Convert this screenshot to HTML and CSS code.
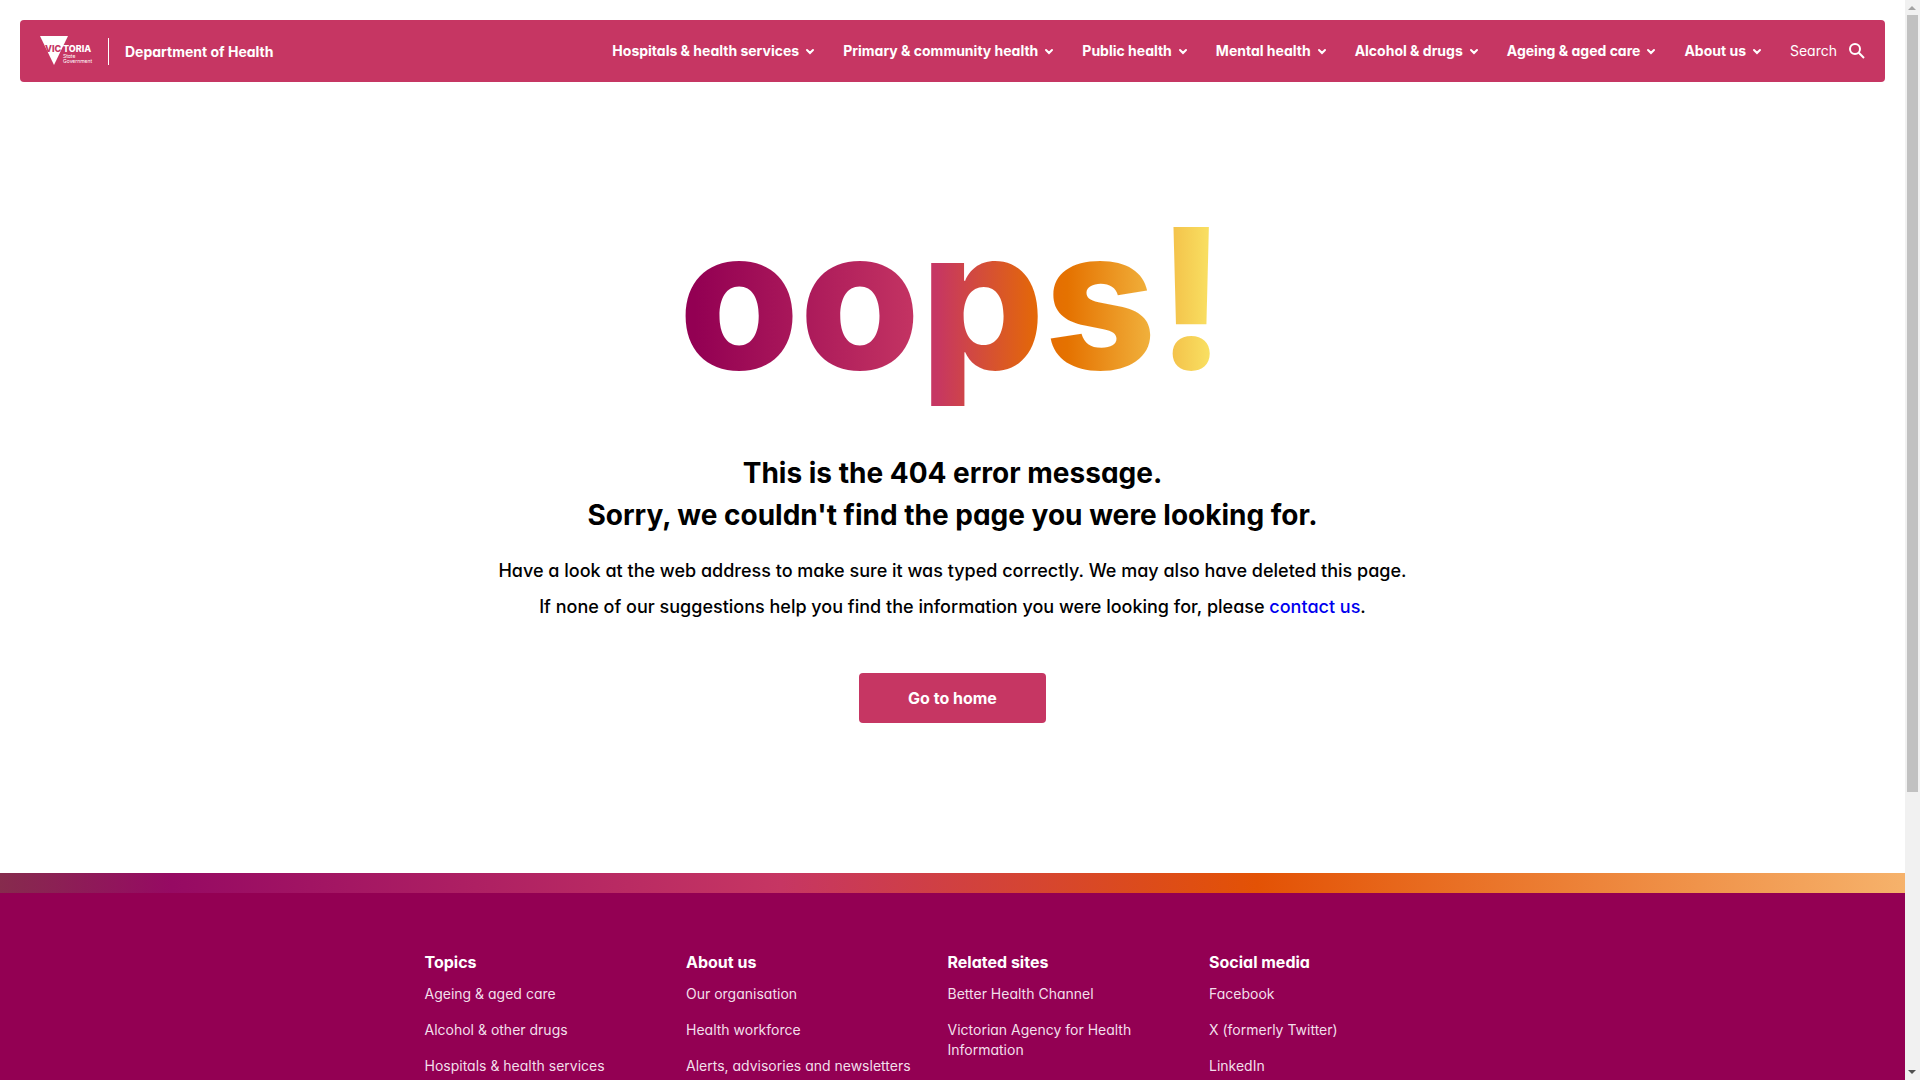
FILE: index.html
```html
<!DOCTYPE html>
<html lang="en">
<head>
    <meta charset="UTF-8">
    <meta name="viewport" content="width=device-width, initial-scale=1.0">
    <title>Page not found | Department of Health</title>
    <link rel="stylesheet" href="styles.css">
</head>
<body>
    <div class="page">
        <header class="header">
            <a class="logo" href="#" aria-label="Victoria State Government">
                <svg width="54" height="32" viewBox="0 0 54 32">
                    <path d="M0 1h28L14 30z" fill="#fff"/>
                    <g class="logo-name">
                        <text x="5" y="17" fill="#c63663">VIC</text>
                        <text x="23" y="17" fill="#fff">TORIA</text>
                    </g>
                    <text class="logo-small" x="23" y="23">State</text>
                    <text class="logo-small" x="23" y="28">Government</text>
                </svg>
            </a>
            <a class="site-name" href="#">Department of Health</a>
            <nav class="nav">
                <button type="button">Hospitals &amp; health services <svg class="chevron" viewBox="0 0 10 7"><path d="M2 2l3 3 3-3"/></svg></button>
                <button type="button">Primary &amp; community health <svg class="chevron" viewBox="0 0 10 7"><path d="M2 2l3 3 3-3"/></svg></button>
                <button type="button">Public health <svg class="chevron" viewBox="0 0 10 7"><path d="M2 2l3 3 3-3"/></svg></button>
                <button type="button">Mental health <svg class="chevron" viewBox="0 0 10 7"><path d="M2 2l3 3 3-3"/></svg></button>
                <button type="button">Alcohol &amp; drugs <svg class="chevron" viewBox="0 0 10 7"><path d="M2 2l3 3 3-3"/></svg></button>
                <button type="button">Ageing &amp; aged care <svg class="chevron" viewBox="0 0 10 7"><path d="M2 2l3 3 3-3"/></svg></button>
                <button type="button">About us <svg class="chevron" viewBox="0 0 10 7"><path d="M2 2l3 3 3-3"/></svg></button>
                <button type="button" class="search">Search
                    <svg width="16" height="16" viewBox="0 0 16 16"><circle cx="6" cy="6" r="5"/><path d="M9.8 9.8L15 15"/></svg>
                </button>
            </nav>
        </header>

        <main class="error">
            <h1 class="oops">oops!</h1>
            <h2>This is the 404 error message.<br>Sorry, we couldn't find the page you were looking for.</h2>
            <p>Have a look at the web address to make sure it was typed correctly. We may also have deleted this page.</p>
            <p>If none of our suggestions help you find the information you were looking for, please <a href="#">contact us</a>.</p>
            <button type="button" class="home-button">Go to home</button>
        </main>

        <footer class="footer">
            <div class="footer-links">
                <section>
                    <h3>Topics</h3>
                    <ul>
                        <li><a href="#">Ageing &amp; aged care</a></li>
                        <li><a href="#">Alcohol &amp; other drugs</a></li>
                        <li><a href="#">Hospitals &amp; health services</a></li>
                    </ul>
                </section>
                <section>
                    <h3>About us</h3>
                    <ul>
                        <li><a href="#">Our organisation</a></li>
                        <li><a href="#">Health workforce</a></li>
                        <li><a href="#">Alerts, advisories and newsletters</a></li>
                    </ul>
                </section>
                <section>
                    <h3>Related sites</h3>
                    <ul>
                        <li><a href="#">Better Health Channel</a></li>
                        <li><a href="#">Victorian Agency for Health Information</a></li>
                    </ul>
                </section>
                <section>
                    <h3>Social media</h3>
                    <ul>
                        <li><a href="#">Facebook</a></li>
                        <li><a href="#">X (formerly Twitter)</a></li>
                        <li><a href="#">LinkedIn</a></li>
                    </ul>
                </section>
            </div>
        </footer>
    </div>

    <div class="scrollbar" aria-hidden="true">
        <svg width="15" height="15" viewBox="0 0 15 15"><path d="M3 10h8L7 6z" fill="#a3a3a3"/></svg>
        <div class="track"><div class="thumb"></div></div>
        <svg width="15" height="15" viewBox="0 0 15 15"><path d="M3 5h8L7 9z" fill="#505050"/></svg>
    </div>
</body>
</html>
```
FILE: styles.css
```css
* {
    box-sizing: border-box;
}
body {
    display: flex;
    height: 100vh;
    margin: 0;
    font-family: Inter, "Liberation Sans", sans-serif;
    font-feature-settings: "cv11";
    color: #000;
    background: #fff;
}
button {
    font: inherit;
    font-feature-settings: inherit;
    border: none;
    cursor: pointer;
}
a {
    text-decoration: none;
}
.page {
    flex: 1;
    overflow-y: auto;
    scrollbar-width: none;
}

/* Header */
.header {
    display: flex;
    align-items: center;
    height: 62px;
    margin: 20px 20px 0;
    padding: 0 20px;
    border-radius: 4px;
    background: #c63663;
    color: #fff;
}
.logo {
    display: flex;
    padding-right: 14px;
}
.logo-name {
    font-size: 9px;
    font-weight: 800;
}
.logo-small {
    font-size: 5px;
    font-weight: 400;
    fill: #fff;
}
.site-name {
    padding-left: 16px;
    border-left: 1px solid #fff;
    color: #fff;
    font-size: 14px;
    font-weight: 700;
    line-height: 27px;
}
.nav {
    display: flex;
    align-items: center;
    gap: 28px;
    margin-left: auto;
}
.nav button {
    display: flex;
    align-items: center;
    gap: 6px;
    padding: 0;
    background: none;
    color: #fff;
    font-size: 14px;
    font-weight: 700;
    line-height: 20px;
    white-space: nowrap;
}
.nav svg {
    fill: none;
    stroke: #fff;
    stroke-width: 2;
}
.chevron {
    width: 10px;
    height: 7px;
    stroke-linecap: round;
}
.nav .search {
    gap: 12px;
    font-weight: 400;
}

/* Error message */
.error {
    display: flex;
    flex-direction: column;
    align-items: center;
    padding: 108px 20px 150px;
    text-align: center;
}
.oops {
    margin: 0 0 46px;
    font-size: 195px;
    font-weight: 800;
    line-height: 216px;
    color: transparent;
    background: linear-gradient(to right, #930053 3%, #c63663 45%, #c63663 47%, #e56a04 66%, #e57200 71%, #f1b43f 87%, #f9e062 97%);
    -webkit-background-clip: text;
    background-clip: text;
}
.error h2 {
    margin: 0 0 17px;
    font-size: 28px;
    font-weight: 700;
    line-height: 42px;
}
.error p {
    margin: 0;
    font-size: 18px;
    font-weight: 500;
    line-height: 36px;
}
.error p a {
    color: #0000ee;
}
.home-button {
    margin-top: 48px;
    padding: 13px 49px;
    border-radius: 4px;
    background: #c63663;
    color: #fff;
    font-size: 16px;
    font-weight: 700;
    line-height: 24px;
}

/* Footer */
.footer {
    padding-bottom: 60px;
    background: #930053;
    color: #fff;
}
.footer::before {
    content: "";
    display: block;
    height: 20px;
    background: linear-gradient(to right, #862b4d 0%, #960a63 9%, #c63663 41%, #e35205 66%, #f6b26b 100%);
}
.footer-links {
    display: grid;
    grid-template-columns: repeat(4, 1fr);
    max-width: 1056px;
    margin: 0 auto;
    padding: 57px 10px 0 0;
}
.footer-links section {
    padding-right: 30px;
}
.footer-links h3 {
    margin: 0 0 10px;
    font-size: 16px;
    font-weight: 700;
    line-height: 24px;
}
.footer-links ul {
    display: flex;
    flex-direction: column;
    gap: 16px;
    margin: 0;
    padding: 0;
    list-style: none;
    font-size: 14px;
    line-height: 20px;
}
.footer-links a {
    color: #f2dfea;
}

/* Scrollbar */
.scrollbar {
    display: flex;
    flex-direction: column;
    flex: 0 0 15px;
    background: #f1f1f1;
}
.track {
    flex: 1;
    padding: 0 2px;
}
.thumb {
    height: 74%;
    background: #c1c1c1;
}
```
